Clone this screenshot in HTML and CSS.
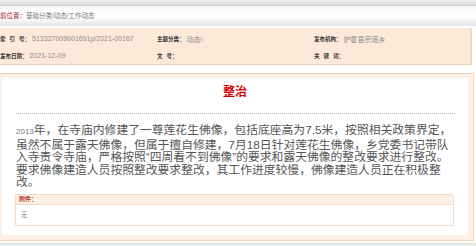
FILE: index.html
```html
<!DOCTYPE html>
<html lang="zh-CN">
<head>
<meta charset="utf-8">
<link rel="stylesheet" href="styles.css">
</head>
<body>
<div class="page">
  <div class="topstrip"></div>
  <div class="crumb">
    <span class="crumb-label">当前位置：</span><span class="crumb-path">基础分类/动态/工作动态</span>
  </div>
  <div class="info">
    <div class="cell"><span class="lbl">索 引 号：</span><span class="val">513327009001691p/2021-00167</span></div>
    <div class="cell"><span class="lbl">主题分类：</span><span class="val">动态\</span></div>
    <div class="cell"><span class="lbl">发布机构：</span><span class="val">炉霍县宗塔乡</span></div>
    <div class="cell"><span class="lbl">发布日期：</span><span class="val">2021-12-09</span></div>
    <div class="cell"><span class="lbl">文 号：</span><span class="val"></span></div>
    <div class="cell"><span class="lbl">关 键 词：</span><span class="val"></span></div>
  </div>
  <div class="frame">
    <div class="article">
      <h1 class="title">整治</h1>
      <div class="divider"></div>
      <p class="content"><span class="year">2013</span>年，在寺庙内修建了一尊莲花生佛像，包括底座高为7.5米，按照相关政策界定，虽然不属于露天佛像，但属于擅自修建，7月18日针对莲花生佛像，乡党委书记带队入寺责令寺庙，严格按照“四周看不到佛像”的要求和露天佛像的整改要求进行整改。要求佛像建造人员按照整改要求整改，其工作进度较慢，佛像建造人员正在积极整改。</p>
      <div class="attach">
        <div class="attach-head">附件：</div>
        <div class="attach-body">无</div>
      </div>
    </div>
  </div>
  <div class="footer"></div>
</div>
</body>
</html>
```

FILE: styles.css
```css
html, body {
  margin: 0;
  padding: 0;
  background: #fff;
}
body {
  width: 476px;
  height: 246px;
  overflow: hidden;
  font-family: "Liberation Sans", "Noto Sans CJK SC", sans-serif;
}
.page {
  width: 476px;
}
.topstrip {
  height: 5px;
  background: linear-gradient(#ececec, #dadada);
  border-bottom: 1px solid #cfcfcf;
}
.crumb {
  height: 20px;
  display: flex;
  align-items: center;
  background: linear-gradient(#f4f4f4 0%, #ffffff 25%, #ffffff 55%, #e4e4e4 100%);
  font-size: 6.5px;
  line-height: 10px;
  white-space: nowrap;
  overflow: hidden;
}
.crumb-label {
  margin-left: -6.5px;
  color: #a52222;
}
.crumb-path {
  color: #777;
}
.info {
  margin-top: 2px;
  width: 470px;
  padding-top: 2px;
  background: #fde9d8;
  border-right: 2px solid #f5d3b5;
  border-bottom: 1px solid #f0cfb0;
  display: grid;
  grid-template-columns: 157px 157px 156px;
  grid-auto-rows: 17px;
  height: 34px;
}
.cell {
  display: flex;
  align-items: center;
  white-space: nowrap;
  overflow: hidden;
}
.lbl {
  font-size: 5.5px;
  color: #333;
  font-weight: bold;
  word-spacing: 2.5px;
  white-space: pre;
  margin-right: 2px;
}
.val {
  font-size: 7px;
  color: #8a8a8a;
}
.frame {
  margin-top: 8px;
  width: 466px;
  padding: 4px 5px 5px 2px;
  background: #fdf1e6;
  border-top: 1px solid #ecd3b9;
  border-right: 1px solid #f3dcc6;
  border-bottom: 1px solid #f0d6bd;
}
.article {
  background: #fff;
  padding-bottom: 9px;
}
.title {
  margin: 0;
  padding-top: 6px;
  text-align: center;
  font-size: 12px;
  line-height: 16px;
  font-weight: bold;
  color: #d40000;
}
.divider {
  margin: 13px 13px 0 14px;
  border-top: 1px dotted #b5b5b5;
}
.content {
  margin: 10px 0 0 14px;
  width: 437px;
  font-size: 11.8px;
  line-height: 12.5px;
  color: #555;
}
.year {
  font-size: 8px;
  color: #777;
}
.attach {
  margin: 5px 0 0 13px;
  width: 439px;
  box-sizing: border-box;
  border: 1px solid #f3dcc6;
}
.attach-head {
  height: 9px;
  line-height: 9px;
  background: #fdefe4;
  border-bottom: 1px solid #f3dcc6;
  padding-left: 3px;
  font-size: 6px;
  font-weight: bold;
  color: #b03030;
}
.attach-body {
  height: 20px;
  line-height: 20px;
  padding-left: 5px;
  font-size: 6.5px;
  color: #888;
}
.footer {
  margin-top: 2px;
  height: 6px;
  background: #ececec;
  border-top: 1px solid #d8d8d8;
}
```
